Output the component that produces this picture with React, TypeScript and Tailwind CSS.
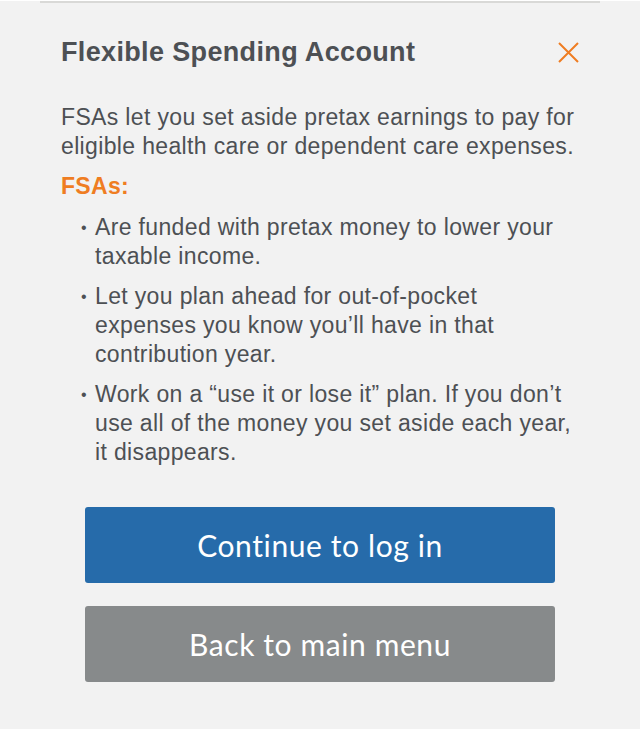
import React from "react";

export default function App() {
  const body = "text-[#4d5054] text-[23px] leading-[29px] tracking-[0.35px]";
  return (
    <div className="min-h-[729px] w-[640px] bg-[#f2f2f2]" style={{ fontFamily: '"Liberation Sans", Arial, sans-serif' }}>
      <div className="mx-[40px] border-t-2 border-[#d9d9d7] mt-[1px] pl-[21px] pr-[17px]">
        <div className="flex items-center justify-between pt-[33px]">
          <h1 className="text-[27px] leading-[32px] font-bold tracking-[0.35px] text-[#4d5054]">Flexible Spending Account</h1>
          <button className="mr-[4px] w-[21px] h-[21px]" aria-label="Close">
            <svg viewBox="0 0 21 21" width="21" height="21">
              <path d="M1 1 L20 20 M20 1 L1 20" stroke="#ef7d22" strokeWidth="2" fill="none" />
            </svg>
          </button>
        </div>
        <p className={`${body} mt-[35px]`}>
          FSAs let you set aside pretax earnings to pay for eligible health care or dependent care expenses.
        </p>
        <p className="mt-[11px] text-[#ef7d22] text-[23px] leading-[29px] font-bold tracking-[0.3px]">FSAs:</p>
        <ul className="mt-[12px] flex flex-col gap-[11px]">
          {[
            "Are funded with pretax money to lower your taxable income.",
            "Let you plan ahead for out-of-pocket expenses you know you’ll have in that contribution year.",
            "Work on a “use it or lose it” plan. If you don’t use all of the money you set aside each year, it disappears.",
          ].map((t) => (
            <li key={t} className={`${body} flex pl-[20px]`}>
              <span className="w-[14px] shrink-0 text-[16px]">•</span>
              <span>{t}</span>
            </li>
          ))}
        </ul>
        <div className="mt-[40px] pl-[24px] pr-[28px] flex flex-col gap-[23px]" style={{ fontFamily: 'Lato, "Open Sans", sans-serif' }}>
          <button className="h-[76px] w-full rounded-[3px] bg-[#266baa] text-white text-[30px] tracking-[0.6px]">Continue to log in</button>
          <button className="h-[76px] w-full rounded-[3px] bg-[#878a8b] text-white text-[30px] tracking-[0.6px]">Back to main menu</button>
        </div>
      </div>
    </div>
  );
}
